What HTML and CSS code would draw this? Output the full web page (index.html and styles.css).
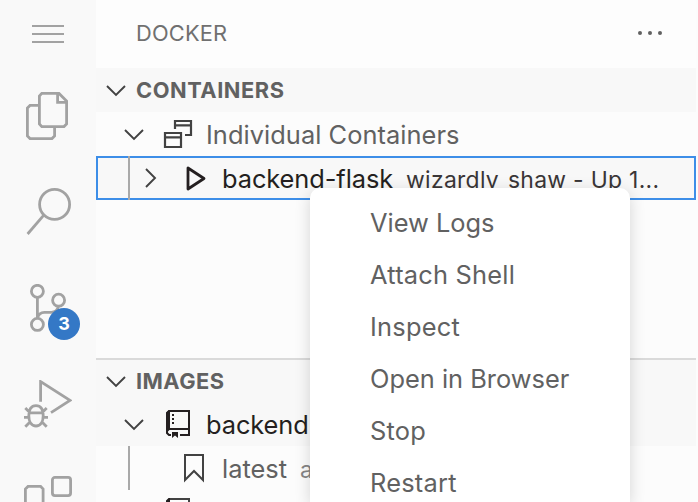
FILE: index.html
```html
<!DOCTYPE html>
<html lang="en">
<head>
<meta charset="utf-8">
<title>Docker</title>
<link rel="stylesheet" href="styles.css">
</head>
<body>
<div class="workbench">
  <nav class="activity">
    <div class="menu-button">
      <svg width="32" height="18" viewBox="0 0 32 18"><path d="M0 1h32M0 9h32M0 17h32" stroke="#a2a2a2" stroke-width="2"/></svg>
    </div>
    <div class="action">
      <svg class="act-icon" viewBox="0 0 48 48"><path d="M14 13.4H6L3.4 16v28L6 46.6h22L30.6 44v-8M17.8 1.4H35l7.6 7.6v23L40 34.6H17.8L15.4 32V4z M33.6 2v8.4H42"/></svg>
    </div>
    <div class="action">
      <svg class="act-icon" viewBox="0 0 48 48"><circle cx="30.6" cy="16.4" r="15"/><path d="M19.8 27.2 3.6 46"/></svg>
    </div>
    <div class="action">
      <svg class="act-icon" viewBox="0 0 48 48"><circle cx="13.4" cy="7.3" r="6"/><circle cx="34.6" cy="16.2" r="6"/><circle cx="13.4" cy="40.4" r="6"/><path d="M13.4 13.3v21M13.4 34.4c1-4 3-6 7-6h7c4 0 6-2 7.2-6.2"/></svg>
      <span class="badge">3</span>
    </div>
    <div class="action">
      <svg class="act-icon" viewBox="0 0 48 48"><path d="M16.6 21.8V1.6L46 20.4 27 32.6"/><path d="M12 25.6c-5 0-7.2 4-7.2 10.2S7.6 46 12 46s7.2-4 7.2-10.2S17 25.6 12 25.6zM5 32.8h14M0 37.4h4.5M19.5 37.4H24M1.3 28l4.2 4.2M22.7 28l-4.2 4.2M1.3 46.8 6 42M22.7 46.8 18 42"/></svg>
    </div>
    <div class="action">
      <svg class="act-icon" viewBox="0 0 48 48"><rect x="28.4" y="1.4" width="18.2" height="18.2" rx="2.5"/><path d="M19.1 28.4V13L16.6 10.4H4L1.4 13v31L4 46.6h31l2.6-2.6V31L35 28.4H1.4M19.1 28.4v18.2"/></svg>
    </div>
  </nav>

  <main class="sidebar">
    <header class="title">
      <span class="title-text">DOCKER</span>
      <svg width="26" height="6" viewBox="0 0 26 6"><g fill="#616161"><circle cx="3" cy="3" r="2"/><circle cx="13" cy="3" r="2"/><circle cx="23" cy="3" r="2"/></g></svg>
    </header>

    <section class="containers">
      <div class="section-head">
        <svg class="chevron" viewBox="0 0 20 20"><path d="m1 6 9 9 9-9"/></svg>
        <span class="head-containers">CONTAINERS</span>
      </div>
      <div class="row level-1">
        <svg class="chevron" viewBox="0 0 20 20"><path d="m1 6 9 9 9-9"/></svg>
        <svg class="icon" viewBox="0 0 32 32"><path d="M3 15h16v14H3zM3 19.4h16M13 11V3h16v14h-6M13 7.4h16"/></svg>
        <span class="label t-individual">Individual Containers</span>
      </div>
      <div class="row level-2 selected">
        <i class="guide"></i>
        <svg class="chevron right" viewBox="0 0 20 20"><path d="m6 1 9 9-9 9"/></svg>
        <svg class="icon dark play" viewBox="0 0 32 32"><path d="M7 6v21l16-10.5z"/></svg>
        <span class="label t-dark">backend-flask</span>
        <span class="label desc">wizardly_shaw - Up 1...</span>
      </div>
    </section>

    <section class="images">
      <div class="section-head">
        <svg class="chevron" viewBox="0 0 20 20"><path d="m1 6 9 9 9-9"/></svg>
        <span class="head-images">IMAGES</span>
      </div>
      <div class="row level-1 hovered">
        <svg class="chevron" viewBox="0 0 20 20"><path d="m1 6 9 9 9-9"/></svg>
        <svg class="icon dark repo" viewBox="0 0 32 32"><path d="M5 25.5V5l2-2h20v24H18M9 27H7l-2-2v-2l2-2h20"/><path class="solid" d="M4 5 7 2h1v18l-4 3zM10 6h2v2h-2zM10 10h2v2h-2zM10 14h2v2h-2zM10 24h6v6l-3-2.5-3 2.5z"/></svg>
        <span class="label t-dark">backend</span>
      </div>
      <div class="row level-2">
        <i class="guide"></i>
        <svg class="icon tag" viewBox="0 0 32 32"><path d="M7 3h18v25l-9-9-9 9z"/></svg>
        <span class="label t-latest">latest</span>
        <span class="label desc muted">a</span>
      </div>
      <div class="row level-1 last">
        <svg class="icon repo" viewBox="0 0 32 32"><path d="M5 25.5V5l2-2h20v24H18M9 27H7l-2-2v-2l2-2h20"/><path class="solid" d="M4 5 7 2h1v18l-4 3z"/></svg>
      </div>
    </section>
  </main>
</div>

<div class="context-menu">
  <div class="item">View Logs</div>
  <div class="item wide">Attach Shell</div>
  <div class="item wide">Inspect</div>
  <div class="item">Open in Browser</div>
  <div class="item wide">Stop</div>
  <div class="item wide">Restart</div>
</div>
</body>
</html>
```
FILE: styles.css
```css
* { box-sizing: border-box; }
html { height: 502px; overflow: hidden; }
body {
  margin: 0;
  width: 698px;
  height: 502px;
  overflow: hidden;
  background: #fcfcfc;
  color: #616161;
  font: 25.4px/44px Inter, "Liberation Sans", sans-serif;
  white-space: nowrap;
}
svg { display: block; flex: none; fill: none; }
.workbench { display: flex; height: 502px; overflow: hidden; }
.activity { flex: none; width: 96px; background: #f9f9f9; }
.menu-button { height: 68px; display: flex; align-items: center; justify-content: center; }
.action { position: relative; height: 96px; display: flex; align-items: center; justify-content: center; }
.act-icon { width: 48px; height: 48px; stroke: #a2a2a2; stroke-width: 2.8; }
.badge {
  position: absolute;
  left: 48px;
  top: 48px;
  width: 32px;
  height: 32px;
  border-radius: 50%;
  background: #3478c6;
  color: #fff;
  font-size: 18px;
  font-weight: 700;
  line-height: 32px;
  text-align: center;
}
.sidebar { flex: none; width: 600px; }
.title {
  height: 68px;
  padding: 0 33px 2px 40px;
  display: flex;
  align-items: center;
  justify-content: space-between;
  background: #fdfdfd;
  color: #707070;
  font-size: 21.8px;
  letter-spacing: .2px;
}
.containers { height: 290px; }
.section-head {
  height: 44px;
  padding-left: 10px;
  display: flex;
  align-items: center;
  gap: 10px;
  background: #f8f8f8;
  font-size: 21.8px;
  font-weight: 700;
}
.head-containers { letter-spacing: .55px; }
.head-images { letter-spacing: .45px; }
.chevron { width: 20px; height: 20px; stroke: #424242; stroke-width: 1.9; }
.icon { width: 32px; height: 32px; stroke: #424242; stroke-width: 2.2; }
.icon.dark { stroke: #241f20; }
.solid { fill: #241f20; stroke: none; }
.row { position: relative; height: 44px; display: flex; align-items: center; }
.label { padding-top: 2px; }
.level-1 { padding-left: 28px; }
.level-1 .icon { margin: 0 12px 0 18px; }
.level-1.last { padding-left: 48px; }
.level-2 { padding-left: 44px; }
.guide { position: absolute; left: 32px; top: 0; bottom: 0; width: 2px; background: #a9a9a9; }
.selected { background: #f8f8f8; box-shadow: inset 0 0 0 2px #3d8ee8; }
.play { margin: 0 9px 0 21px; stroke-width: 2.8; stroke-linejoin: round; }
.desc { font-size: 22.9px; margin-left: 13px; padding-top: 4px; letter-spacing: .3px; color: #3a3637; }
.t-individual { letter-spacing: .05px; }
.t-dark { color: #241f20; letter-spacing: -.08px; }
.images { height: 144px; overflow: hidden; border-top: 2px solid #dadada; }
.images .section-head { height: 42px; }
.hovered { background: #f8f8f8; }
.repo { stroke-width: 2; }
.tag { margin: 0 12px 0 38px; stroke-width: 2; }
.muted { color: #858585; }
.context-menu {
  position: absolute;
  left: 310px;
  top: 188px;
  width: 320px;
  height: 314px;
  overflow: hidden;
  padding: 9px 0 0 60px;
  border-radius: 10px 10px 0 0;
  background: #fff;
  box-shadow: 0 4px 16px rgba(0, 0, 0, .16);
}
.item { height: 52px; line-height: 52px; }
.item.wide { letter-spacing: .22px; }
```
